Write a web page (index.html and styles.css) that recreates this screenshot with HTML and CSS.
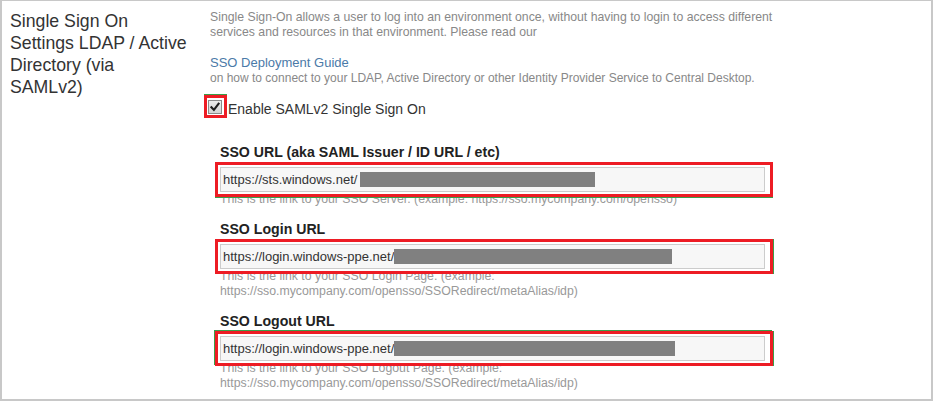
FILE: index.html
```html
<!DOCTYPE html>
<html lang="en">
<head>
<meta charset="utf-8">
<title>Single Sign On Settings</title>
<link rel="stylesheet" href="styles.css">
</head>
<body>
<div class="panel">
  <div class="title">Single Sign On Settings LDAP / Active Directory (via SAMLv2)</div>
  <div class="content">
    <p class="intro">Single Sign-On allows a user to log into an environment once, without having to login to access different services and resources in that environment. Please read our</p>
    <p class="guide"><a href="#">SSO Deployment Guide</a><br>on how to connect to your LDAP, Active Directory or other Identity Provider Service to Central Desktop.</p>
    <label class="enable-row">
      <span class="cb-mark"><span class="checkbox"><svg width="14" height="14" viewBox="0 0 14 14"><defs><linearGradient id="cbg" x1="0" y1="0" x2="0" y2="1"><stop offset="0" stop-color="#ececec"/><stop offset="1" stop-color="#d2d2d2"/></linearGradient></defs><rect x="0.5" y="0.5" width="13" height="13" fill="url(#cbg)" stroke="#8a8a8a"/><path d="M3.4 7.2 L5.9 9.9 L10.6 3.6" fill="none" stroke="#1e1e1e" stroke-width="2.1" stroke-linecap="square"/></svg></span></span>
      <span class="enable-text">Enable SAMLv2 Single Sign On</span>
    </label>
    <div class="fields">
      <div class="field">
        <div class="field-label">SSO URL (aka SAML Issuer / ID URL / etc)</div>
        <div class="input-wrap mark-a"><div class="input"><span>https://sts.windows.net/</span><span class="redact r1"></span></div></div>
        <div class="help">This is the link to your SSO Server. (example: https://sso.mycompany.com/opensso)</div>
      </div>
      <div class="field">
        <div class="field-label">SSO Login URL</div>
        <div class="input-wrap mark-b"><div class="input"><span>https://login.windows-ppe.net/</span><span class="redact r2"></span></div></div>
        <div class="help">This is the link to your SSO Login Page. (example: https://sso.mycompany.com/opensso/SSORedirect/metaAlias/idp)</div>
      </div>
      <div class="field">
        <div class="field-label">SSO Logout URL</div>
        <div class="input-wrap mark-c"><div class="input"><span>https://login.windows-ppe.net/</span><span class="redact r3"></span></div></div>
        <div class="help">This is the link to your SSO Logout Page. (example: https://sso.mycompany.com/opensso/SSORedirect/metaAlias/idp)</div>
      </div>
    </div>
  </div>
</div>
</body>
</html>
```
FILE: styles.css
```css
* { box-sizing: border-box; }
body {
  margin: 0;
  background: #fff;
  font-family: "Liberation Sans", Arial, sans-serif;
}
.panel {
  width: 933px;
  height: 401px;
  border: 2px solid #c8c8c8;
  border-top-width: 1px;
  display: flex;
}
.title {
  flex: 0 0 208px;
  padding: 9px 20px 0 8px;
  font-size: 17.7px;
  line-height: 22px;
  color: #333;
}
.content {
  flex: 1;
  padding-top: 9px;
}
.intro, .guide {
  width: 590px;
  font-size: 12px;
  line-height: 15px;
  color: #888;
}
.intro { margin: 0 0 15px; font-size: 12.25px; }
.guide { margin: 0; }
.guide a {
  font-size: 13px;
  color: #4b7aa8;
  text-decoration: none;
}
.enable-row {
  display: flex;
  align-items: flex-end;
  margin: 9px 0 0 -6px;
}
.cb-mark {
  display: flex;
  border: 3px solid #ed1c24;
  padding: 2px 2px 1px 1px;
  box-shadow: 0 -1px 0 #3a9e4a;
}
.checkbox {
  display: block;
  width: 14px;
  height: 14px;
}
.checkbox svg { display: block; }
.enable-text {
  font-size: 14px;
  line-height: 17px;
  color: #333;
  margin-left: 1px;
}
.fields {
  margin: 26px 0 0 10px;
}
.field + .field { margin-top: 14px; }
.field-label {
  font-weight: bold;
  font-size: 14.15px;
  line-height: 17px;
  color: #222;
  margin-bottom: 6px;
}
.input-wrap {
  position: relative;
  width: 545px;
}
.input-wrap::after {
  content: "";
  position: absolute;
  left: -5px;
  top: -5px;
  right: -8px;
  bottom: -5px;
  border: 3px solid #ed1c24;
}
.mark-a::after { box-shadow: 0 1px 0 #3a9e4a; }
.mark-b::after { box-shadow: 1px 0 0 #3a9e4a; }
.mark-c::after { box-shadow: -1px -1px 0 #3a9e4a, 1px 0 0 #3a9e4a; }
.input {
  height: 25px;
  border: 1px solid #ccc;
  background: #f7f7f7;
  display: flex;
  align-items: center;
  padding: 0 2px;
  font-size: 13px;
  color: #333;
  white-space: nowrap;
}
.redact {
  display: inline-block;
  height: 15px;
  background: #808080;
}
.r1 { width: 235px; margin-left: 3px; }
.r2 { width: 278px; }
.r3 { width: 281px; }
.help {
  width: 545px;
  font-size: 12.3px;
  line-height: 15px;
  color: #999;
}
```
